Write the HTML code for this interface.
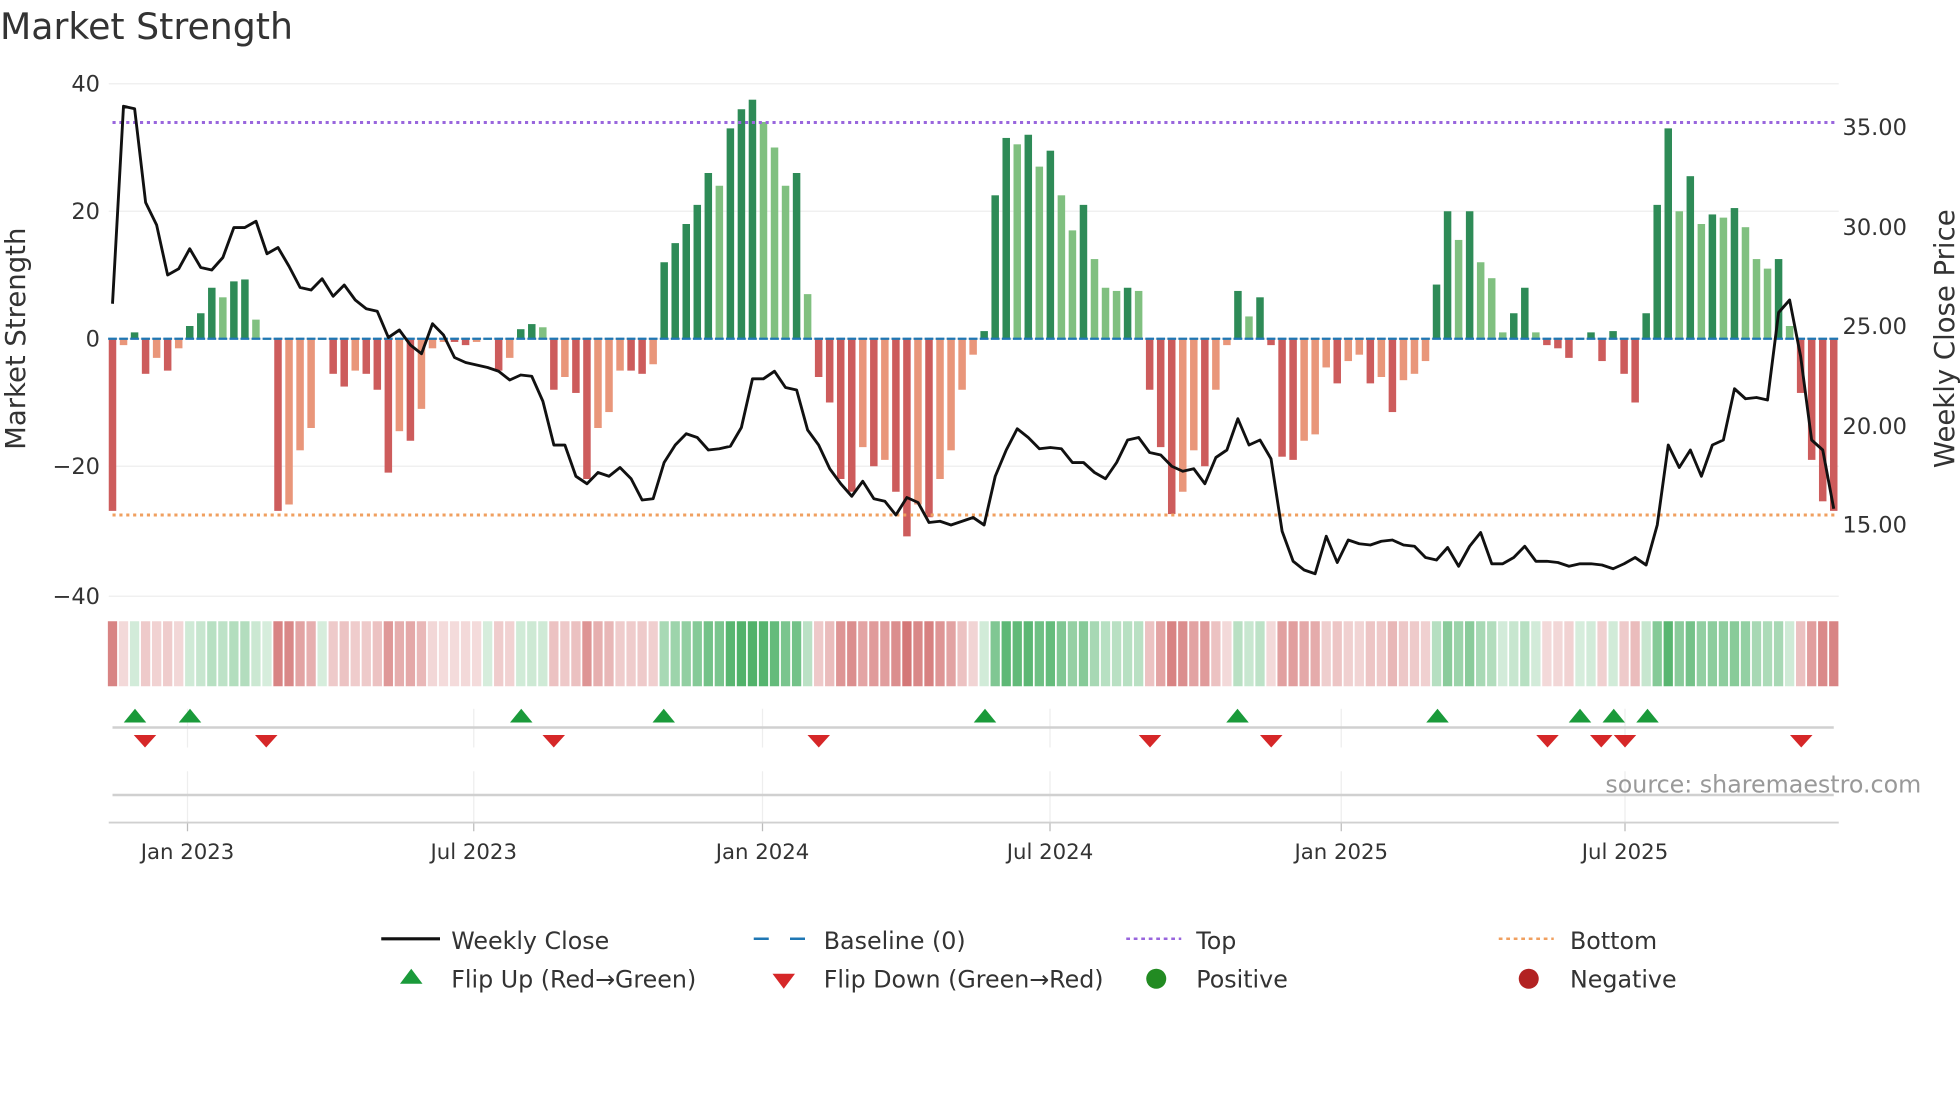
<!DOCTYPE html>
<html><head><meta charset="utf-8"><style>
html,body{margin:0;padding:0;background:#fff;width:1960px;height:1102px;overflow:hidden}
svg{display:block;font-family:"DejaVu Sans","Liberation Sans",sans-serif}
</style></head><body>
<svg id="s" width="1960" height="1102" viewBox="0 0 1568 881.6" xmlns="http://www.w3.org/2000/svg">
<text x="0" y="31" font-size="29" fill="#333">Market Strength</text>
<g id="grid"></g>
<g id="heat"></g>
<g id="bars"></g>
<line x1="90" y1="98" x2="1470" y2="98" stroke="#9966dd" stroke-width="2.4" stroke-dasharray="2.5,3"/>
<line x1="90" y1="412" x2="1470" y2="412" stroke="#f0a060" stroke-width="2.4" stroke-dasharray="2.5,3"/>
<polyline id="price" fill="none" stroke="#111" stroke-width="2.3" stroke-linejoin="round"/>
<g id="marks"></g>
<g font-size="18" fill="#333" text-anchor="end">
<text x="80" y="73">40</text><text x="80" y="175">20</text><text x="80" y="277">0</text><text x="80" y="379">−20</text><text x="80" y="483">−40</text>
</g>
<g font-size="18" fill="#333">
<text x="1474" y="108">35.00</text><text x="1474" y="188">30.00</text><text x="1474" y="267">25.00</text><text x="1474" y="347">20.00</text><text x="1474" y="426">15.00</text>
</g>
<text transform="translate(20,271) rotate(-90)" font-size="22" fill="#333" text-anchor="middle">Market Strength</text>
<text transform="translate(1563,271) rotate(-90)" font-size="22" fill="#333" text-anchor="middle">Weekly Close Price</text>
<text x="1537" y="634" font-size="19" fill="#999" text-anchor="end">source: sharemaestro.com</text>
<g font-size="17" fill="#333" text-anchor="middle">
<text x="150" y="687">Jan 2023</text><text x="379" y="687">Jul 2023</text><text x="610" y="687">Jan 2024</text><text x="840" y="687">Jul 2024</text><text x="1073" y="687">Jan 2025</text><text x="1300" y="687">Jul 2025</text>
</g>
<g font-size="19" fill="#333">
<line x1="305" y1="751" x2="352" y2="751" stroke="#111" stroke-width="2.5"/><text x="361" y="759">Weekly Close</text>
<line x1="603" y1="751" x2="646" y2="751" stroke="#1f77b4" stroke-width="2" stroke-dasharray="12,17"/><text x="659" y="759">Baseline (0)</text>
<line x1="901" y1="751" x2="945" y2="751" stroke="#9966dd" stroke-width="2" stroke-dasharray="3,3"/><text x="957" y="759">Top</text>
<line x1="1199" y1="751" x2="1243" y2="751" stroke="#f0a060" stroke-width="2" stroke-dasharray="3,3"/><text x="1256" y="759">Bottom</text>
<polygon points="320,787 338,787 329,775" fill="#1a9a3a"/><text x="361" y="790">Flip Up (Red→Green)</text>
<polygon points="618,779 636,779 627,791" fill="#d62728"/><text x="659" y="790">Flip Down (Green→Red)</text>
<circle cx="925" cy="783" r="8" fill="#228b22"/><text x="957" y="790">Positive</text>
<circle cx="1223" cy="783" r="8" fill="#b22222"/><text x="1256" y="790">Negative</text>
</g>
</svg>
<script>
var NS="http://www.w3.org/2000/svg";
function el(p,t,a){var e=document.createElementNS(NS,t);for(var k in a)e.setAttribute(k,a[k]);p.appendChild(e);return e;}
var v=[-27,-1,1,-5.5,-3,-5,-1.5,2,4,8,6.5,9,9.3,3,0,-27,-26,-17.5,-14,0,-5.5,-7.5,-5,-5.5,-8,-21,-14.5,-16,-11,-1.5,-0.5,-0.5,-1,-0.5,0,-5,-3,1.5,2.3,1.8,-8,-6,-8.5,-22,-14,-11.5,-5,-5,-5.5,-4,12,15,18,21,26,24,33,36,37.5,34,30,24,26,7,-6,-10,-22,-24,-17,-20,-19,-24,-31,-26,-28,-22,-17.5,-8,-2.5,1.2,22.5,31.5,30.5,32,27,29.5,22.5,17,21,12.5,8,7.5,8,7.5,-8,-17,-27.5,-24,-17.5,-20,-8,-1,7.5,3.5,6.5,-1,-18.5,-19,-16,-15,-4.5,-7,-3.5,-2.5,-7,-6,-11.5,-6.5,-5.5,-3.5,8.5,20,15.5,20,12,9.5,1,4,8,1,-1,-1.5,-3,0,1,-3.5,1.2,-5.5,-10,4,21,33,20,25.5,18,19.5,19,20.5,17.5,12.5,11,12.5,2,-8.5,-19,-25.5,-27];
var n=v.length,x0=90,step=(1467-90)/(n-1);
var g=document.getElementById("grid");
[67,169,271,373,477].forEach(function(y){el(g,"line",{x1:87,x2:1471,y1:y,y2:y,stroke:"#eee","stroke-width":1});});
[150,379,610,840,1073,1300].forEach(function(x){
 el(g,"line",{x1:x,x2:x,y1:567,y2:598,stroke:"#eee","stroke-width":1});
 el(g,"line",{x1:x,x2:x,y1:617,y2:658,stroke:"#eee","stroke-width":1});
 el(g,"line",{x1:x,x2:x,y1:658,y2:665,stroke:"#bbb","stroke-width":1});
});
el(g,"line",{x1:90,x2:1467,y1:582,y2:582,stroke:"#d0d0d0","stroke-width":2});
el(g,"line",{x1:90,x2:1467,y1:636,y2:636,stroke:"#d0d0d0","stroke-width":2});
el(g,"line",{x1:87,x2:1471,y1:658,y2:658,stroke:"#d0d0d0","stroke-width":1.5});
var b=document.getElementById("bars"),h=document.getElementById("heat");
for(var i=0;i<n;i++){
 var x=x0+i*step,val=v[i],prev=i?v[i-1]:0,c;
 if(val>=0)c=(val>=prev)?"#2e8b57":"#80c080"; else c=(val<=prev)?"#cd5c5c":"#e9967a";
 var y=271-val*5.1;
 el(b,"rect",{x:x-3,width:6,y:Math.min(y,271),height:Math.max(Math.abs(271-y),0.8),fill:c});
 el(b,"line",{x1:x-3.5,x2:x+3.5,y1:271,y2:271,stroke:"#1f77b4","stroke-width":1.8});
 var a=0.2+Math.min(Math.abs(val),35)/35*0.65;
 var hc=val>=0?"rgba(50,165,80,"+a+")":"rgba(200,80,80,"+a+")";
 el(h,"rect",{x:x-step/2+0.7,width:step-1.4,y:497,height:52,fill:hc});
}
var p=[243,85,87,162,180,220,215,199,214,216,206,182,182,177,203,198,213,230,232,223,237,228,240,247,249,270,264,276,283,259,268,286,290,292,294,297,304,300,301,321,356,356,381,387,378,381,374,383,400,399,370,356,347,350,360,359,357,342,303,303,297,310,312,344,356,375,387,397,385,399,401,412,398,402,418,417,420,417,414,420,381,360,343,350,359,358,359,370,370,378,383,370,352,350,362,364,373,377,375,387,366,360,335,356,352,367,425,449,456,459,429,450,432,435,436,433,432,436,437,446,448,438,453,437,426,451,451,446,437,449,449,450,453,451,451,452,455,451,446,452,420,356,374,360,381,356,352,311,319,318,320,250,240,285,352,360,407];
var pts=[];for(var j=0;j<p.length;j++)pts.push((x0+j*(1467-90)/(p.length-1)).toFixed(1)+","+p[j]);
document.getElementById("price").setAttribute("points",pts.join(" "));
var m=document.getElementById("marks");
[108,152,417,531,788,990,1150,1264,1291,1318].forEach(function(x){el(m,"polygon",{points:(x-9)+",578 "+(x+9)+",578 "+x+",567",fill:"#1a9a3a"});});
[116,213,443,655,920,1017,1238,1281,1300,1441].forEach(function(x){el(m,"polygon",{points:(x-9)+",588 "+(x+9)+",588 "+x+",598",fill:"#d62728"});});
</script>
</body></html>
